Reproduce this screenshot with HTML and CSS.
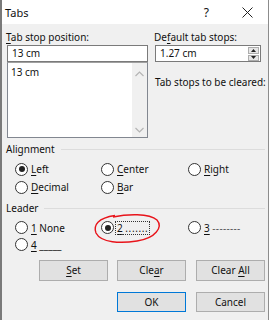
FILE: index.html
```html
<!DOCTYPE html>
<html lang="en">
<head>
    <meta charset="UTF-8">
    <title>Tabs</title>
    <link rel="stylesheet" href="styles.css">
</head>
<body>
    <div class="dialog">
        <div class="titlebar">
            <span class="title">Tabs</span>
            <span class="help">?</span>
            <svg class="close" width="11" height="11" viewBox="0 0 11 11">
                <path d="M0.5 0.5 L10.5 10.5 M10.5 0.5 L0.5 10.5" stroke="#222" stroke-width="1" fill="none"/>
            </svg>
        </div>

        <div class="content">
            <div class="top">
                <div class="col-left">
                    <div class="lbl"><u>T</u>ab stop position:</div>
                    <div class="edit">13 cm</div>
                    <div class="list">
                        <div class="list-item">13 cm</div>
                        <div class="scroll">
                            <svg width="9" height="6" viewBox="0 0 9 6"><path d="M0.5 5 L4.5 1 L8.5 5" stroke="#b4b4b4" stroke-width="1.2" fill="none"/></svg>
                            <svg width="9" height="6" viewBox="0 0 9 6"><path d="M0.5 1 L4.5 5 L8.5 1" stroke="#b4b4b4" stroke-width="1.2" fill="none"/></svg>
                        </div>
                    </div>
                </div>
                <div class="col-right">
                    <div class="lbl">De<u>f</u>ault tab stops:</div>
                    <div class="edit spin">
                        <span>1.27 cm</span>
                        <div class="spin-btns">
                            <div class="spin-btn"><svg width="5" height="3" viewBox="0 0 5 3"><path d="M0 3 L2.5 0 L5 3 Z" fill="#222"/></svg></div>
                            <div class="spin-btn"><svg width="5" height="3" viewBox="0 0 5 3"><path d="M0 0 L2.5 3 L5 0 Z" fill="#222"/></svg></div>
                        </div>
                    </div>
                    <div class="cleared">Tab stops to be cleared:</div>
                </div>
            </div>

            <div class="group">
                <div class="group-head"><span>Alignment</span><span class="rule"></span></div>
                <div class="radios">
                    <div class="radio checked"><span class="dot"></span><span><u>L</u>eft</span></div>
                    <div class="radio"><span class="dot"></span><span><u>C</u>enter</span></div>
                    <div class="radio"><span class="dot"></span><span><u>R</u>ight</span></div>
                    <div class="radio"><span class="dot"></span><span><u>D</u>ecimal</span></div>
                    <div class="radio"><span class="dot"></span><span><u>B</u>ar</span></div>
                </div>
            </div>

            <div class="group leader">
                <div class="group-head"><span>Leader</span><span class="rule"></span></div>
                <div class="radios">
                    <div class="radio"><span class="dot"></span><span><u>1</u> None</span></div>
                    <div class="radio checked"><span class="dot"></span><span class="focus"><u>2</u> <span class="dots">.......</span></span></div>
                    <div class="radio"><span class="dot"></span><span><u>3</u> <span class="dashes">--------</span></span></div>
                    <div class="radio"><span class="dot"></span><span><u>4</u> _____</span></div>
                </div>
            </div>

            <div class="btn-row">
                <div class="btn"><span><u>S</u>et</span></div>
                <div class="btn">Cle<u>a</u>r</div>
                <div class="btn">Clear <u>A</u>ll</div>
            </div>
            <div class="btn-row last">
                <div class="btn default">OK</div>
                <div class="btn">Cancel</div>
            </div>
        </div>

        <svg class="annotation" width="72" height="36" viewBox="0 0 72 36">
            <path d="M22 7 C 36 4, 58 3, 66 10 C 72 17, 65 28, 46 31 C 30 33.5, 10 33, 5 23 C 2 15, 7 8, 24 5.5" stroke="#e8141b" stroke-width="1.4" fill="none"/>
        </svg>
    </div>
</body>
</html>
```

FILE: styles.css
```css
body {
    margin: 0;
    font-family: "Noto Sans", sans-serif;
    font-size: 10px;
    color: #111;
    background-color: #fff;
}
u {
    text-decoration-thickness: 1px;
    text-underline-offset: 2px;
}
.dialog {
    position: relative;
    width: 266px;
    height: 320px;
    border-left: 2px solid #7a7a7a;
    border-right: 1px solid #8c8c8c;
    background-color: #f0f0f0;
}
.titlebar {
    height: 24px;
    background-color: #fff;
    display: flex;
    align-items: center;
    padding-left: 3px;
    font-size: 11px;
}
.title {
    flex: 1;
}
.help {
    margin-right: 33px;
    font-size: 12px;
}
.close {
    margin-right: 15px;
}
.content {
    padding: 0 0 0 5px;
}
.top {
    display: flex;
    gap: 7px;
}
.lbl {
    height: 14px;
    line-height: 14px;
    margin: 6px 0 1px -1px;
}
.col-left {
    width: 141px;
}
.edit {
    height: 15px;
    line-height: 15px;
    border: 1px solid #7a7a7a;
    background-color: #fff;
    padding-left: 4px;
}
.list {
    height: 74px;
    border: 1px solid #828790;
    border-top-color: #a0a0a0;
    background-color: #fff;
    display: flex;
}
.list-item {
    flex: 1;
    padding: 2px 0 0 3px;
    line-height: 14px;
}
.scroll {
    width: 15px;
    background-color: #f0f0f0;
    display: flex;
    flex-direction: column;
    justify-content: space-between;
    align-items: center;
    padding: 8px 0 4px;
}
.col-right {
    width: 106px;
}
.spin {
    display: flex;
    justify-content: space-between;
    padding-right: 1px;
}
.spin-btns {
    display: flex;
    flex-direction: column;
    gap: 1px;
    padding-top: 1px;
}
.spin-btn {
    width: 9px;
    height: 6px;
    background-color: #e6e6e6;
    border: 1px solid #adadad;
    display: flex;
    align-items: center;
    justify-content: center;
}
.cleared {
    margin-top: 13px;
    line-height: 14px;
    white-space: nowrap;
}
.group {
    margin-top: 4px;
}
.group-head {
    display: flex;
    align-items: center;
    gap: 6px;
    height: 14px;
    line-height: 14px;
    margin-left: -1px;
    width: 259px;
}
.rule {
    flex: 1;
    height: 1px;
    background-color: #dcdcdc;
}
.radios {
    display: grid;
    grid-template-columns: 86px 87px 70px;
    grid-auto-rows: 18px;
    margin: 4px 0 0 8px;
}
.leader {
    margin-top: 5px;
}
.leader .radios {
    grid-auto-rows: 17px;
}
.radio {
    display: flex;
    align-items: center;
    gap: 3px;
    white-space: nowrap;
}
.dot {
    width: 11px;
    height: 11px;
    border: 1px solid #333;
    border-radius: 50%;
    background-color: #fff;
    display: flex;
    align-items: center;
    justify-content: center;
    flex-shrink: 0;
}
.checked .dot::after {
    content: "";
    width: 6px;
    height: 6px;
    border-radius: 50%;
    background-color: #222;
}
.focus {
    outline: 1px dotted #333;
    outline-offset: 0;
    padding: 0 1px 0 1px;
    margin-left: -1px;
    line-height: 12px;
}
.dots {
    letter-spacing: 0.6px;
}
.dashes {
    letter-spacing: 0.3px;
    color: #555;
}
.btn-row {
    display: flex;
    gap: 9px;
    margin-top: 7px;
    padding-left: 32px;
}
.btn-row .btn:last-child {
    margin-left: 1px;
}
.btn-row.last {
    margin-top: 11px;
    padding-left: 110px;
}
.btn {
    width: 67px;
    height: 19px;
    line-height: 19px;
    text-align: center;
    background-color: #e1e1e1;
    border: 1px solid #adadad;
}
.btn-row.last .btn {
    height: 18px;
    line-height: 18px;
}
.btn.default {
    border-color: #0078d7;
}
.annotation {
    position: absolute;
    left: 89px;
    top: 210px;
}
```
